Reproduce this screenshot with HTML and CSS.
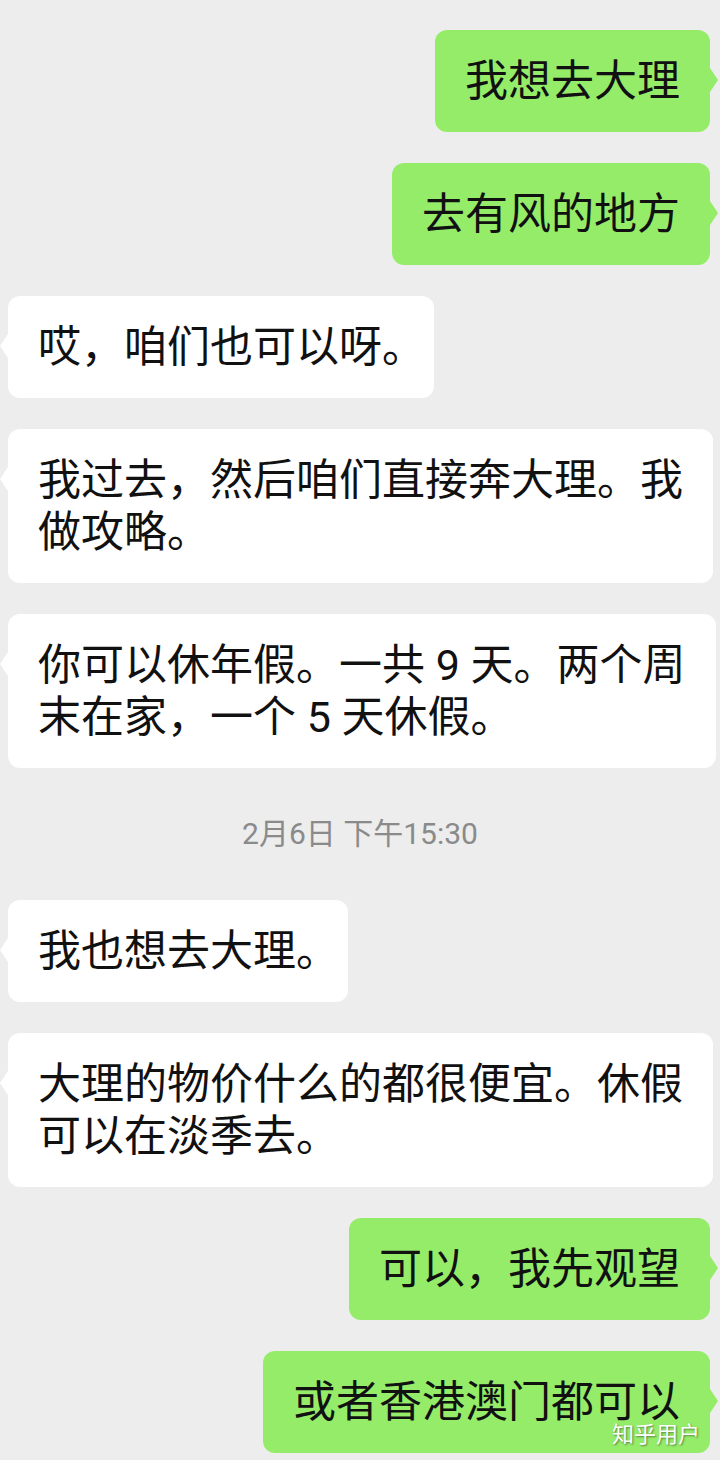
FILE: index.html
```html
<html>
	<head>
		<meta charset="utf-8"/>
		<link rel="stylesheet" href="styles.css">
	</head>
	<body>
		<div class="chat">
			<div class="row right"><div class="bubble">我想去大理</div></div>
			<div class="row right"><div class="bubble">去有风的地方</div></div>
			<div class="row left"><div class="bubble">哎，咱们也可以呀<span class="end">。</span></div></div>
			<div class="row left"><div class="bubble full">我过去，然后咱们直接奔大理。我<br>做攻略。</div></div>
			<div class="row left"><div class="bubble full">你可以休年假。一共 9 天。两个周<br>末在家，一个 5 天休假。</div></div>
			<div class="time">2月6日 下午15:30</div>
			<div class="row left"><div class="bubble">我也想去大理<span class="end">。</span></div></div>
			<div class="row left"><div class="bubble full">大理的物价什么的都很便宜。休假<br>可以在淡季去。</div></div>
			<div class="row right"><div class="bubble">可以，我先观望</div></div>
			<div class="row right"><div class="bubble">或者香港澳门都可以</div></div>
			<div class="watermark">知乎用户</div>
		</div>
	</body>
</html>
```
FILE: styles.css
```css
body{
	margin: 0;
	background-color: #ededed;
	font-family: Roboto, "Noto Sans CJK SC", sans-serif;
}
.chat{
	position: relative;
	display: flex;
	flex-direction: column;
	gap: 31px;
	padding-top: 30px;
}
.row{
	display: flex;
}
.row.right{
	justify-content: flex-end;
	padding-right: 10px;
}
.row.left{
	justify-content: flex-start;
	padding-left: 8px;
}
.bubble{
	position: relative;
	padding: 25px 30px;
	font-size: 43px;
	line-height: 52px;
	border-radius: 12px;
	color: #111;
	white-space: nowrap;
}
.right .bubble{
	background-color: #95ec69;
}
.left .bubble{
	background-color: #fff;
}
.bubble.full{
	flex: 1;
	margin-right: 8px;
}
/* trailing full stop: the phone trims its empty right half */
.end{
	font-feature-settings: "halt";
}
.bubble::after{
	content: "";
	position: absolute;
	top: 38px;
	border-top: 12px solid transparent;
	border-bottom: 12px solid transparent;
}
.right .bubble::after{
	left: 100%;
	border-left: 8px solid #95ec69;
}
.left .bubble::after{
	right: 100%;
	border-right: 8px solid #fff;
}
.time{
	text-align: center;
	font-size: 30px;
	line-height: 70px;
	color: #8a8a8a;
}
.watermark{
	position: absolute;
	top: 1420px;
	right: 20px;
	font-size: 22px;
	line-height: 30px;
	color: #fff;
	text-shadow: 1px 1px 2px rgba(0,0,0,0.45);
}
```
